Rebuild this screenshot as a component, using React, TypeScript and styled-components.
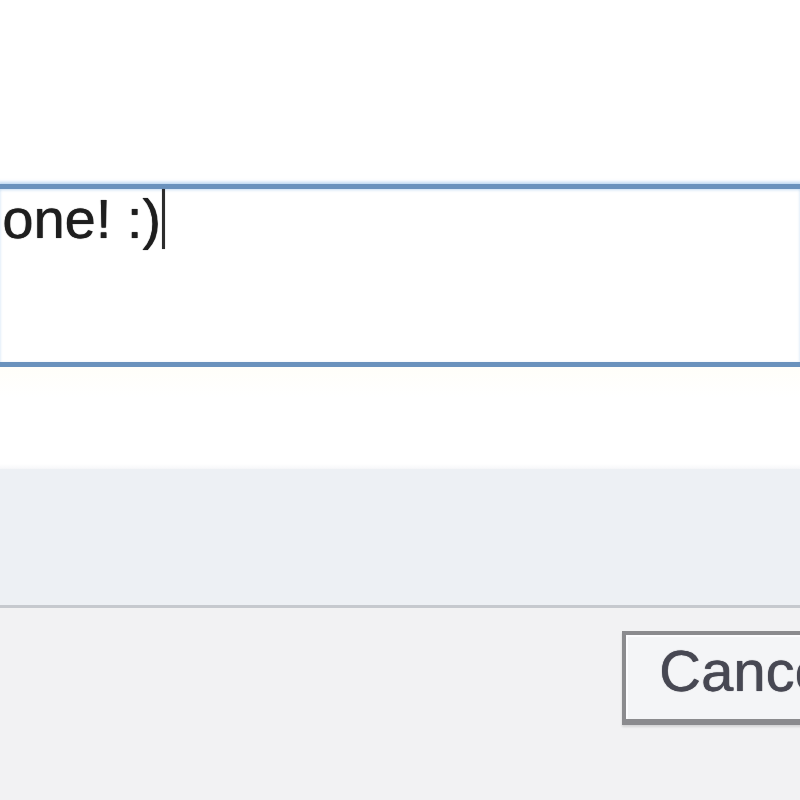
import React from "react";
import styled, { createGlobalStyle } from "styled-components";

const Global = createGlobalStyle`
  html, body { margin: 0; padding: 0; background: #ffffff; overflow: hidden; }
  #root { width: 800px; height: 800px; }
`;

const Page = styled.div`
  width: 800px;
  height: 800px;
  display: flex;
  flex-direction: column;
  background: #ffffff;
  font-family: "Liberation Sans", Arial, Helvetica, sans-serif;
  overflow: hidden;
`;

const TopArea = styled.div`
  height: 184px;
  flex: none;
  background: #ffffff;
`;

const TextBox = styled.div`
  flex: none;
  box-sizing: border-box;
  height: 183px;
  border-top: 5px solid #6a92bd;
  border-bottom: 5px solid #6a92bd;
  box-shadow: 0 0 3px 2px rgba(160, 198, 235, 0.7),
    inset 0 1px 3px rgba(160, 198, 235, 0.6);
  background: #ffffff;
  display: flex;
  align-items: flex-start;
`;

const TextLine = styled.div`
  width: 161px;
  flex: none;
  display: flex;
  justify-content: flex-end;
  font-size: 56px;
  line-height: 60px;
  color: #1e1e1e;
  white-space: nowrap;
  text-shadow: 0 0 1px rgba(0, 0, 0, 0.8), 0.5px 0 0 rgba(0, 0, 0, 0.6);
`;

const Caret = styled.span`
  flex: none;
  width: 3px;
  height: 60px;
  margin-left: 1px;
  background: #2c2c2c;
  box-shadow: 0 0 1px rgba(0, 0, 0, 0.5);
`;

const Gap = styled.div`
  height: 102px;
  flex: none;
  background: linear-gradient(#fffef9, #ffffff 30%, #ffffff 95%, #f6f7f9);
`;

const Panel = styled.div`
  height: 136px;
  flex: none;
  background: #edf0f4;
  border-bottom: 3px solid #c6c9ce;
  box-shadow: 0 1px 2px rgba(0, 0, 0, 0.06);
`;

const Footer = styled.div`
  flex: 1;
  background: #f2f2f3;
  display: flex;
  align-items: flex-start;
  padding: 23px 0 0 622px;
`;

const Button = styled.button`
  flex: none;
  box-sizing: border-box;
  height: 94px;
  width: 300px;
  margin: 0;
  padding: 7px 0 0 33px;
  border: 4px solid #8b8b8e;
  border-bottom-width: 6px;
  border-right: none;
  background: #f4f5f7;
  box-shadow: inset 2px 2px 0 #fcfcfe, 0 2px 2px rgba(0, 0, 0, 0.12);
  font-family: "Liberation Sans", Arial, Helvetica, sans-serif;
  font-size: 58px;
  line-height: 58px;
  color: #474853;
  text-shadow: 0 0 1px rgba(50, 50, 60, 0.8), 0.5px 0 0 rgba(50, 50, 60, 0.6);
  text-align: left;
  white-space: nowrap;
  display: flex;
  align-items: flex-start;
`;

export default function App() {
  return (
    <>
      <Global />
      <Page>
        <TopArea />
        <TextBox>
          <TextLine>Sent from my iPhone! :)</TextLine>
          <Caret />
        </TextBox>
        <Gap />
        <Panel />
        <Footer>
          <Button>Cancel</Button>
        </Footer>
      </Page>
    </>
  );
}
